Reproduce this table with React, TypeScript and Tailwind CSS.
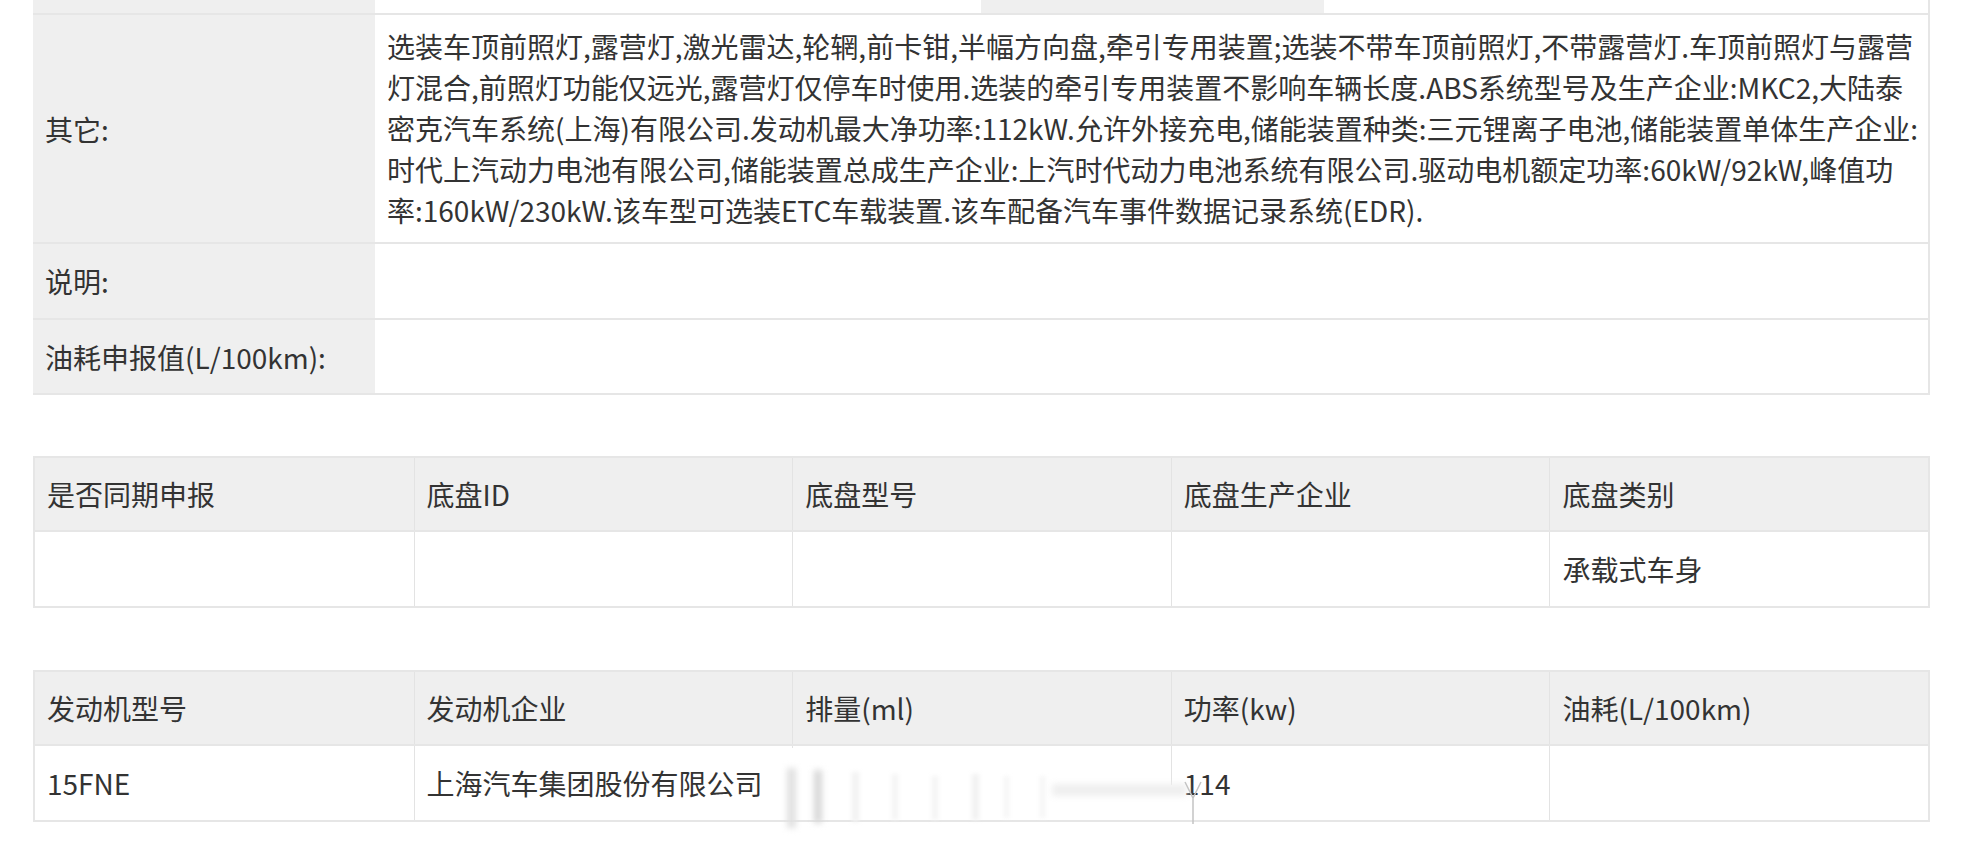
import React from "react";

const otherLines = [
  "选装车顶前照灯,露营灯,激光雷达,轮辋,前卡钳,半幅方向盘,牵引专用装置;选装不带车顶前照灯,不带露营灯.车顶前照灯与露营",
  "灯混合,前照灯功能仅远光,露营灯仅停车时使用.选装的牵引专用装置不影响车辆长度.ABS系统型号及生产企业:MKC2,大陆泰",
  "密克汽车系统(上海)有限公司.发动机最大净功率:112kW.允许外接充电,储能装置种类:三元锂离子电池,储能装置单体生产企业:",
  "时代上汽动力电池有限公司,储能装置总成生产企业:上汽时代动力电池系统有限公司.驱动电机额定功率:60kW/92kW,峰值功",
  "率:160kW/230kW.该车型可选装ETC车载装置.该车配备汽车事件数据记录系统(EDR).",
];

const chassisHead = ["是否同期申报", "底盘ID", "底盘型号", "底盘生产企业", "底盘类别"];
const chassisRow = ["", "", "", "", "承载式车身"];
const engineHead = ["发动机型号", "发动机企业", "排量(ml)", "功率(kw)", "油耗(L/100km)"];
const engineRow = ["15FNE", "上海汽车集团股份有限公司", "", "114", ""];

function GridTable({ head, row, children }: { head: string[]; row: string[]; children?: React.ReactNode }) {
  return (
    <div className="relative border-x-2 border-[#e6e6e6]">
      <div className="grid grid-cols-5 h-[76px] border-y-2 border-[#e6e6e6] bg-[#efefef]">
        {head.map((h, i) => (
          <div key={i} className={`flex items-center px-3 ${i > 0 ? "border-l border-[#e3e3e3]" : ""}`}>
            {h}
          </div>
        ))}
      </div>
      <div className="grid grid-cols-5 h-[76px] border-b-2 border-[#e6e6e6] bg-white">
        {row.map((c, i) => (
          <div key={i} className={`flex items-center px-3 whitespace-nowrap ${i > 0 ? "border-l border-[#e3e3e3]" : ""}`}>
            {c}
          </div>
        ))}
      </div>
      {children}
    </div>
  );
}

// smudge left over from the screenshot, lies over the engine table body row
function Smudge() {
  return (
    <div className="pointer-events-none absolute inset-0">
      <div className="absolute left-[753px] top-[78px] w-[14px] h-[72px] bg-white" />
      <div className="absolute left-[1136px] top-[115px] w-[6px] h-[35px] bg-white" />
      <div className="absolute left-[752px] top-[98px] w-[9px] h-[60px] bg-[#e0e0e0] blur-[3px]" />
      <div className="absolute left-[779px] top-[100px] w-[8px] h-[53px] bg-[#d6d6d6] blur-[3px]" />
      <div className="absolute left-[817px] top-[102px] w-[7px] h-[50px] bg-[#f2f2f2] blur-[2px]" />
      <div className="absolute left-[857px] top-[104px] w-[6px] h-[46px] bg-[#f4f4f4] blur-[2px]" />
      <div className="absolute left-[897px] top-[106px] w-[6px] h-[44px] bg-[#f4f4f4] blur-[2px]" />
      <div className="absolute left-[937px] top-[104px] w-[7px] h-[46px] bg-[#f1f1f1] blur-[2px]" />
      <div className="absolute left-[969px] top-[106px] w-[5px] h-[42px] bg-[#f5f5f5] blur-[2px]" />
      <div className="absolute left-[1005px] top-[106px] w-[5px] h-[42px] bg-[#f5f5f5] blur-[2px]" />
      <div className="absolute left-[1017px] top-[114px] w-[135px] h-[12px] bg-[#efefef] blur-[3px]" />
      <svg className="absolute left-[1146px] top-[108px]" width="26" height="48" viewBox="0 0 26 48">
        <path d="M4 4 L12 20 L20 4 M12 20 L12 46" stroke="#c4c4c4" strokeWidth="1.5" fill="none" />
      </svg>
    </div>
  );
}

export default function App() {
  return (
    <div className="min-h-[850px] bg-white text-[28px] text-[#333] font-['Noto_Sans_CJK_SC','Noto_Sans',sans-serif]">
      <div className="ml-[33px] w-[1897px]">
        {/* spec table */}
        <div className="border-r-2 border-[#e6e6e6]">
          <div className="flex h-[15px] border-b-2 border-[#e6e6e6]">
            <div className="w-[342px] bg-[#efefef]" />
            <div className="w-[606px] bg-white" />
            <div className="w-[343px] bg-[#efefef]" />
            <div className="flex-1 bg-white" />
          </div>
          <div className="flex border-b-2 border-[#e6e6e6]">
            <div className="w-[342px] shrink-0 bg-[#efefef] flex items-center px-3">其它:</div>
            <div className="flex-1 px-3 py-[11px] leading-[41px] whitespace-nowrap">
              {otherLines.map((l, i) => (
                <div key={i}>{l}</div>
              ))}
            </div>
          </div>
          <div className="flex h-[76px] border-b-2 border-[#e6e6e6]">
            <div className="w-[342px] shrink-0 bg-[#efefef] flex items-center px-3">说明:</div>
            <div className="flex-1" />
          </div>
          <div className="flex h-[75px] border-b-2 border-[#e6e6e6]">
            <div className="w-[342px] shrink-0 bg-[#efefef] flex items-center px-3">油耗申报值(L/100km):</div>
            <div className="flex-1" />
          </div>
        </div>

        <div className="mt-[61px]">
          <GridTable head={chassisHead} row={chassisRow} />
        </div>

        <div className="mt-[62px]">
          <GridTable head={engineHead} row={engineRow}>
            <Smudge />
          </GridTable>
        </div>
      </div>
    </div>
  );
}
